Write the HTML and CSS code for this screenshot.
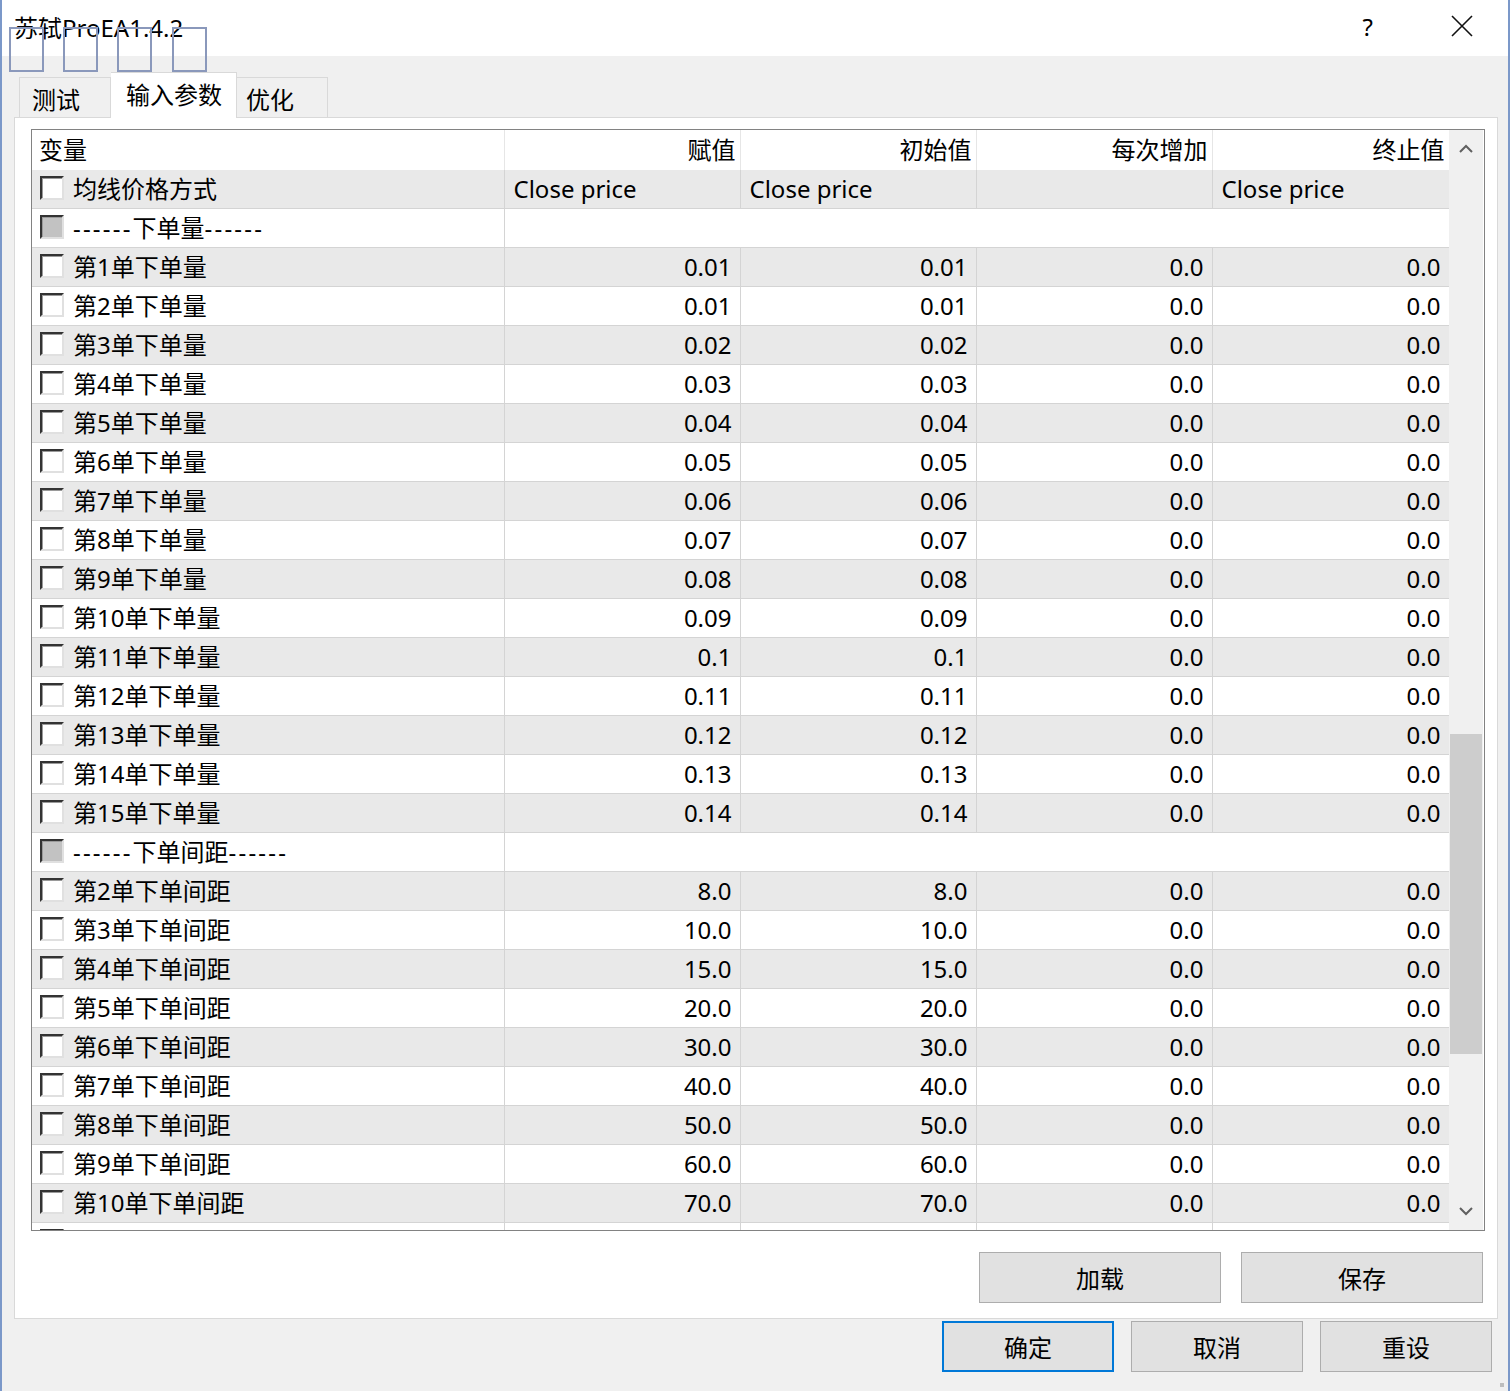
FILE: index.html
```html
<!DOCTYPE html>
<html lang="zh-CN">
<head>
    <meta charset="UTF-8">
    <title>苏轼ProEA1.4.2</title>
    <link rel="stylesheet" href="styles.css">
</head>
<body>
    <div class="window">
        <div class="titlebar">
            <span class="title">苏轼ProEA1.4.2</span>
            <span class="help">?</span>
            <svg class="close" width="24" height="24" viewBox="0 0 24 24"><path d="M2 2 L22 22 M22 2 L2 22" stroke="#111" stroke-width="1.6" fill="none"/></svg>
        </div>
        <div class="marks">
            <span class="mark m1"></span><span class="mark m2"></span><span class="mark m3"></span><span class="mark m4"></span>
        </div>

        <div class="content">
            <div class="tabs">
                <div class="tab">测试</div>
                <div class="tab active">输入参数</div>
                <div class="tab">优化</div>
            </div>
            <div class="panel">
                <div class="grid">
                    <div class="table-wrap">
                        <table>
                            <colgroup>
                                <col style="width:472px"><col style="width:236px"><col style="width:236px"><col style="width:236px"><col style="width:237px">
                            </colgroup>
                            <thead>
                                <tr>
                                    <th class="name">变量</th>
                                    <th>赋值</th>
                                    <th>初始值</th>
                                    <th>每次增加</th>
                                    <th>终止值</th>
                                </tr>
                            </thead>
                            <tbody id="rows"></tbody>
                        </table>
                    </div>
                    <div class="scrollbar">
                        <svg class="arrow" width="14" height="9" viewBox="0 0 14 9"><path d="M1 8 L7 2 L13 8" stroke="#606060" stroke-width="2" fill="none"/></svg>
                        <div class="track"><div class="thumb"></div></div>
                        <svg class="arrow" width="14" height="9" viewBox="0 0 14 9"><path d="M1 1 L7 7 L13 1" stroke="#606060" stroke-width="2" fill="none"/></svg>
                    </div>
                </div>
                <div class="panel-buttons">
                    <button class="btn wide">加载</button>
                    <button class="btn wide">保存</button>
                </div>
            </div>
            <div class="dialog-buttons">
                <button class="btn default">确定</button>
                <button class="btn">取消</button>
                <button class="btn">重设</button>
            </div>
        </div>
        <span class="grip"></span>
    </div>
    <script src="app.js"></script>
</body>
</html>
```

FILE: styles.css
```css
body {
    margin: 0;
    width: 1510px;
    height: 1391px;
    overflow: hidden;
    background-color: #ffffff;
    font-family: "Noto Sans", "Noto Sans CJK SC", sans-serif;
    font-size: 24px;
    color: #000;
}
.window {
    position: relative;
    box-sizing: border-box;
    width: 1510px;
    height: 1391px;
    border-left: 2px solid #7b98c9;
    border-right: 2px solid #7b98c9;
    background-color: #f0f0f0;
}
.titlebar {
    height: 56px;
    background-color: #fff;
    display: flex;
    align-items: center;
    padding-left: 12px;
}
.title {
    font-size: 24px;
    flex: 1;
    margin-top: -4px;
}
.help {
    font-size: 24px;
    margin-right: 77px;
    margin-top: -4px;
}
.close {
    margin-right: 34px;
    margin-top: -4px;
}
.marks .mark {
    position: absolute;
    top: 27px;
    width: 31px;
    height: 41px;
    border: 2px solid #8a98bb;
}
.m1 { left: 7px; }
.m2 { left: 61px; }
.m3 { left: 115px; }
.m4 { left: 170px; }

.content {
    padding: 16px 10px 0 12px;
}
.tabs {
    display: flex;
    align-items: flex-end;
    padding-left: 5px;
    height: 45px;
}
.tab {
    height: 40px;
    box-sizing: border-box;
    border: 1px solid #d9d9d9;
    border-bottom: none;
    background-color: #f0f0f0;
    padding: 4px 12px 0 12px;
    line-height: 36px;
}
.tab:first-child {
    width: 92px;
}
.tab + .tab {
    border-left: none;
}
.tab.active {
    height: 46px;
    background-color: #fff;
    padding: 0 14px 0 15px;
    margin-bottom: -1px;
    position: relative;
    line-height: 44px;
}
.tab:last-child {
    width: 91px;
    padding-left: 9px;
}
.panel {
    background-color: #fff;
    border: 1px solid #d9d9d9;
    height: 1202px;
    box-sizing: border-box;
    padding: 11px 14px 0 16px;
}
.grid {
    display: flex;
    height: 1102px;
    box-sizing: border-box;
    border: 1px solid #828282;
    margin-right: -2px;
}
.table-wrap {
    width: 1417px;
    overflow: hidden;
}
table {
    border-collapse: collapse;
    table-layout: fixed;
    width: 1417px;
}
th {
    height: 40px;
    padding: 0 4px 0 0;
    font-weight: normal;
    text-align: right;
    border-right: 1px solid #e6e6e6;
    line-height: 40px;
    white-space: nowrap;
}
th.name {
    text-align: left;
    padding-left: 7px;
}
td {
    height: 38px;
    padding: 0 8px 0 0;
    text-align: right;
    line-height: 38px;
    border-right: 1px solid #d4d4d4;
    border-bottom: 1px solid #d4d4d4;
    white-space: nowrap;
}
tbody tr:nth-child(odd) td {
    background-color: #e9e9e9;
}
td.name {
    text-align: left;
    padding-left: 8px;
}
td.text {
    text-align: left;
    padding-left: 9px;
}
.dash {
    letter-spacing: 2.2px;
}
.check {
    display: inline-block;
    width: 20px;
    height: 20px;
    border: 2px solid;
    border-color: #333 #e0e0e0 #e0e0e0 #333;
    box-shadow: inset 1px 1px 0 #9a9a9a;
    background-color: #fff;
    vertical-align: top;
    margin-top: 6px;
    margin-right: 9px;
}
.check.group {
    background-color: #c2c2c2;
}
.scrollbar {
    width: 34px;
    background-color: #f0f0f0;
    display: flex;
    flex-direction: column;
    align-items: center;
}
.arrow {
    margin: 14px 0;
}
.track {
    flex: 1;
    width: 100%;
    position: relative;
}
.thumb {
    position: absolute;
    left: 1px;
    right: 1px;
    top: 567px;
    height: 320px;
    background-color: #cdcdcd;
}
.panel-buttons {
    display: flex;
    justify-content: flex-end;
    gap: 20px;
    margin-top: 21px;
}
.btn {
    font-family: "Noto Sans CJK SC", sans-serif;
    font-size: 24px;
    background-color: #e1e1e1;
    border: 1px solid #adadad;
    height: 51px;
    width: 172px;
    padding: 0;
    color: #000;
}
.btn.wide {
    width: 242px;
}
.btn.default {
    border: 2px solid #0078d7;
}
.dialog-buttons {
    display: flex;
    justify-content: flex-end;
    gap: 17px;
    margin-top: 2px;
    padding-right: 6px;
}
.grip {
    position: absolute;
    right: 4px;
    bottom: 4px;
    width: 4px;
    height: 4px;
    background-color: #bdbdbd;
}
```

FILE: app.js
```js
const rows = [
    ["均线价格方式", "Close price", "Close price", "", "Close price", "text"],
    ["<span class=\"dash\">------</span>下单量<span class=\"dash\">------</span>", null],
    ["第1单下单量", "0.01", "0.01", "0.0", "0.0"],
    ["第2单下单量", "0.01", "0.01", "0.0", "0.0"],
    ["第3单下单量", "0.02", "0.02", "0.0", "0.0"],
    ["第4单下单量", "0.03", "0.03", "0.0", "0.0"],
    ["第5单下单量", "0.04", "0.04", "0.0", "0.0"],
    ["第6单下单量", "0.05", "0.05", "0.0", "0.0"],
    ["第7单下单量", "0.06", "0.06", "0.0", "0.0"],
    ["第8单下单量", "0.07", "0.07", "0.0", "0.0"],
    ["第9单下单量", "0.08", "0.08", "0.0", "0.0"],
    ["第10单下单量", "0.09", "0.09", "0.0", "0.0"],
    ["第11单下单量", "0.1", "0.1", "0.0", "0.0"],
    ["第12单下单量", "0.11", "0.11", "0.0", "0.0"],
    ["第13单下单量", "0.12", "0.12", "0.0", "0.0"],
    ["第14单下单量", "0.13", "0.13", "0.0", "0.0"],
    ["第15单下单量", "0.14", "0.14", "0.0", "0.0"],
    ["<span class=\"dash\">------</span>下单间距<span class=\"dash\">------</span>", null],
    ["第2单下单间距", "8.0", "8.0", "0.0", "0.0"],
    ["第3单下单间距", "10.0", "10.0", "0.0", "0.0"],
    ["第4单下单间距", "15.0", "15.0", "0.0", "0.0"],
    ["第5单下单间距", "20.0", "20.0", "0.0", "0.0"],
    ["第6单下单间距", "30.0", "30.0", "0.0", "0.0"],
    ["第7单下单间距", "40.0", "40.0", "0.0", "0.0"],
    ["第8单下单间距", "50.0", "50.0", "0.0", "0.0"],
    ["第9单下单间距", "60.0", "60.0", "0.0", "0.0"],
    ["第10单下单间距", "70.0", "70.0", "0.0", "0.0"],
    ["", "", "", "", ""]
];

const body = document.getElementById("rows");
rows.forEach(function (r) {
    const tr = document.createElement("tr");
    const group = r[1] === null;
    let html = '<td class="name"><span class="check' + (group ? ' group' : '') + '"></span>' + r[0] + '</td>';
    if (group) {
        html += '<td colspan="4"></td>';
    } else {
        const cls = r[5] === "text" ? ' class="text"' : '';
        for (let i = 1; i <= 4; i++) {
            html += '<td' + cls + '>' + r[i] + '</td>';
        }
    }
    tr.innerHTML = html;
    body.appendChild(tr);
});
```
